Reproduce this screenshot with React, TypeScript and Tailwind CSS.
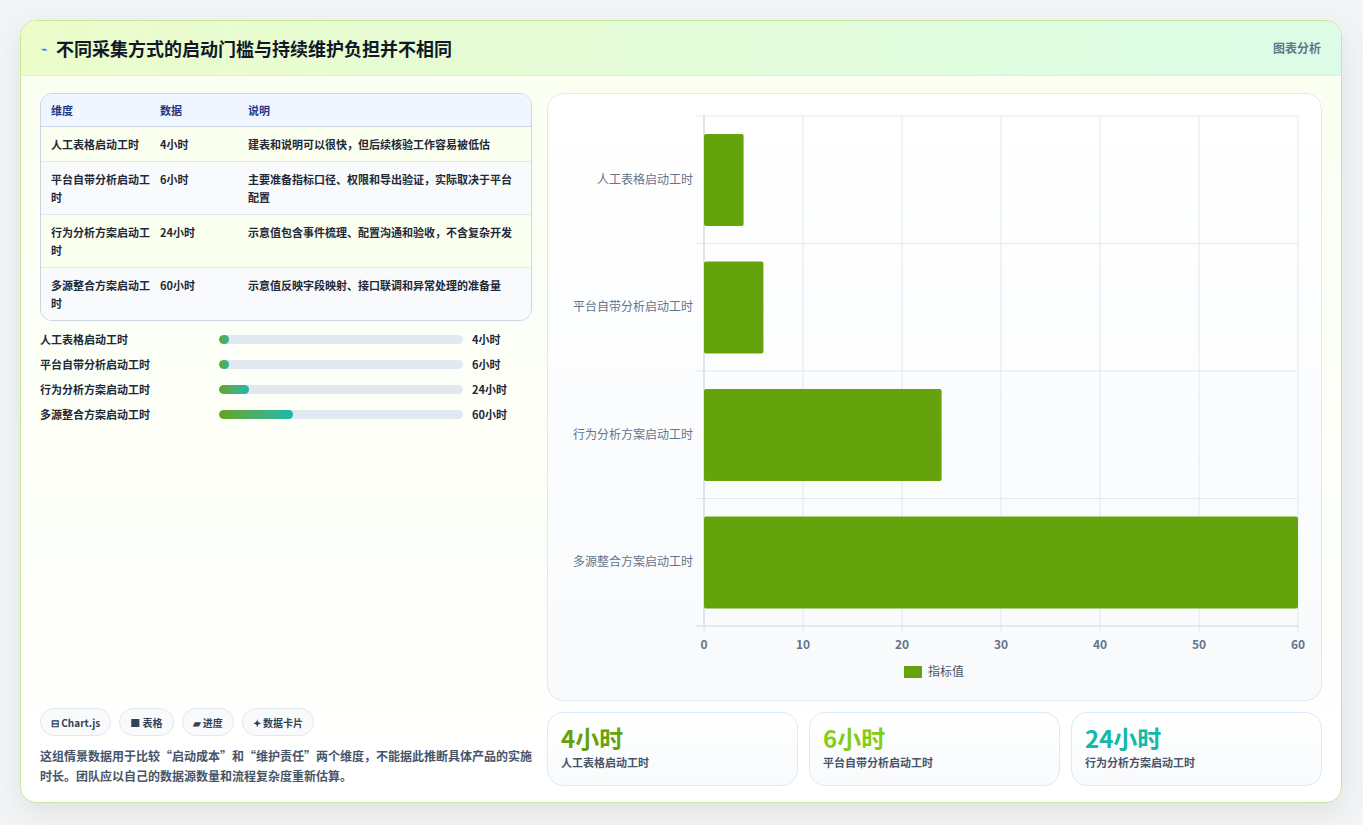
import React from "react";

const rows = [
  { k: "人工表格启动工时", v: "4小时", d: "建表和说明可以很快，但后续核验工作容易被低估" },
  { k: "平台自带分析启动工时", v: "6小时", d: "主要准备指标口径、权限和导出验证，实际取决于平台配置" },
  { k: "行为分析方案启动工时", v: "24小时", d: "示意值包含事件梳理、配置沟通和验收，不含复杂开发" },
  { k: "多源整合方案启动工时", v: "60小时", d: "示意值反映字段映射、接口联调和异常处理的准备量" },
];
const bars = [
  { k: "人工表格启动工时", v: "4小时", w: 10 },
  { k: "平台自带分析启动工时", v: "6小时", w: 10 },
  { k: "行为分析方案启动工时", v: "24小时", w: 30 },
  { k: "多源整合方案启动工时", v: "60小时", w: 74 },
];
const vals = [4, 6, 24, 60];

function Chart() {
  const x0 = 156, x1 = 750, y0 = 22, y1 = 532;
  const rh = (y1 - y0) / 4;
  const sx = (v: number) => x0 + ((x1 - x0) * v) / 60;
  return (
    <svg width="773" height="607" className="block">
      {[0, 10, 20, 30, 40, 50, 60].map((t) => (
        <g key={t}>
          <line x1={sx(t)} x2={sx(t)} y1={y0} y2={y1 + 6} stroke="#e2e8f0" />
          <text x={sx(t)} y={555} textAnchor="middle" fontSize="12" fontWeight="bold" fill="#64748b">{t}</text>
        </g>
      ))}
      {[0, 1, 2, 3].map((i) => (
        <line key={i} x1={x0 - 8} x2={x1} y1={y0 + rh * i} y2={y0 + rh * i} stroke="#e2e8f0" />
      ))}
      <line x1={x0 - 8} x2={x1} y1={y1} y2={y1} stroke="#cbd5e1" />
      <line x1={x0} x2={x0} y1={y0} y2={y1} stroke="#cbd5e1" />
      {rows.map((r, i) => (
        <g key={i}>
          <rect x={x0} y={y0 + rh * i + 18} width={sx(vals[i]) - x0} height={92} rx="2" fill="#65a30d" />
          <text x={x0 - 11} y={y0 + rh * i + rh / 2 + 4} textAnchor="end" fontSize="12" fill="#64748b">{r.k}</text>
        </g>
      ))}
      <rect x={356} y={572} width={18} height={12} fill="#65a30d" />
      <text x={380} y={582} fontSize="12" fill="#475569">指标值</text>
    </svg>
  );
}

export default function App() {
  return (
    <div className="w-[1363px] h-[825px] bg-[#f3f4f6] pt-[20px] px-[20px]" style={{ fontFamily: '"Noto Sans CJK SC", "Noto Sans", sans-serif' }}>
      <div className="w-[1322px] h-[783px] rounded-2xl border border-[#c7e89a] bg-gradient-to-b from-[#fbfff0] to-white shadow-[0_10px_30px_rgba(0,0,0,0.08)] overflow-hidden flex flex-col">
        <div className="h-[55px] shrink-0 flex items-center justify-between px-[20px] bg-gradient-to-r from-[#ecfccb] to-[#dcfce7] border-b border-[#dbeafe]">
          <div className="flex items-center gap-[8px]">
            <span className="text-[11px] text-[#2563eb]">⌁</span>
            <span className="text-[18px] font-bold text-[#111827]">不同采集方式的启动门槛与持续维护负担并不相同</span>
          </div>
          <span className="text-[12px] font-bold text-[#64748b]">图表分析</span>
        </div>
        <div className="flex-1 flex gap-[15px] px-[19px] pt-[17px] pb-[17px]">
          <div className="w-[496px] flex flex-col">
            <div className="rounded-xl border border-[#cbd5e1] overflow-hidden text-[11px] text-[#1f2937] font-semibold">
              <div className="flex h-[33px] items-center bg-[#eff6ff] text-[#1e3a8a] border-b border-[#cbd5e1]">
                <div className="w-[119px] pl-[10px]">维度</div>
                <div className="w-[88px]">数据</div>
                <div className="flex-1">说明</div>
              </div>
              {rows.map((r, i) => (
                <div key={i} className={`flex py-[8px] leading-[18px] ${i % 2 ? "bg-[#f8fafc]" : "bg-[#fbfff0]"} ${i < 3 ? "border-b border-[#e2e8f0]" : ""}`}>
                  <div className="w-[119px] pl-[10px] pr-[6px]">{r.k}</div>
                  <div className="w-[88px]">{r.v}</div>
                  <div className="flex-1 pr-[10px]">{r.d}</div>
                </div>
              ))}
            </div>
            <div className="mt-[9px] flex flex-col gap-[7px]">
              {bars.map((b, i) => (
                <div key={i} className="flex items-center h-[18px] text-[11px] font-semibold text-[#1f2937]">
                  <div className="w-[179px]">{b.k}</div>
                  <div className="w-[244px] h-[9px] rounded-full bg-[#e2e8f0] overflow-hidden">
                    <div className="h-full rounded-full bg-gradient-to-r from-[#65a30d] to-[#14b8a6]" style={{ width: b.w }} />
                  </div>
                  <div className="ml-[9px] font-bold">{b.v}</div>
                </div>
              ))}
            </div>
            <div className="mt-auto flex gap-[8px]">
              {["⊟ Chart.js", "■ 表格", "▰ 进度", "✦ 数据卡片"].map((t) => (
                <span key={t} className="h-[28px] px-[10px] rounded-full border border-[#e2e8f0] bg-[#f8fafc] text-[10px] font-bold text-[#334155] flex items-center">{t}</span>
              ))}
            </div>
            <p className="mt-[10px] text-[12px] leading-[20px] font-semibold text-[#475569]">
              这组情景数据用于比较“启动成本”和“维护责任”两个维度，不能据此推断具体产品的实施时长。团队应以自己的数据源数量和流程复杂度重新估算。
            </p>
          </div>
          <div className="flex-1 flex flex-col gap-[11px]">
            <div className="h-[608px] rounded-2xl border border-[#e2e8f0] bg-gradient-to-b from-white to-[#f8fafc] overflow-hidden">
              <Chart />
            </div>
            <div className="flex gap-[11px]">
              {[
                { v: "4小时", k: "人工表格启动工时", c: "text-[#65a30d]" },
                { v: "6小时", k: "平台自带分析启动工时", c: "text-[#84cc16]" },
                { v: "24小时", k: "行为分析方案启动工时", c: "text-[#14b8a6]" },
              ].map((s) => (
                <div key={s.k} className="flex-1 h-[74px] rounded-2xl border border-[#dbeafe] bg-gradient-to-b from-white to-[#f8fafc] px-[13px] pt-[9px]">
                  <div className={`text-[24px] font-bold leading-[32px] ${s.c}`}>{s.v}</div>
                  <div className="text-[11px] font-semibold text-[#475569]">{s.k}</div>
                </div>
              ))}
            </div>
          </div>
        </div>
      </div>
    </div>
  );
}
